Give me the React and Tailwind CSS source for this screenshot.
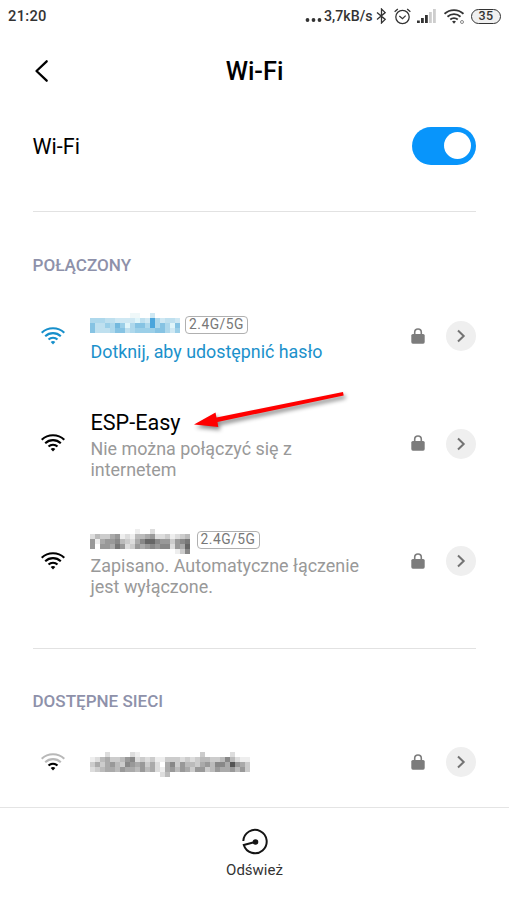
import React from "react";

const blueTones = {
  0: "#ffffff", 1: "#eff8f9", 2: "#e0f5fa", 3: "#cfe8f3", 4: "#bfe0ef",
  5: "#aed8ec", 6: "#9bcfe8", 7: "#86c3e3", 8: "#74b9de", 9: "#4aa5dc",
};

// Each character is one 5px cell: a blue tone, or a hex digit of gray.
const hiddenBlue = [
  "000000001100300000",
  "555443333243953443",
  "744658625775957527",
  "744457745666677536",
];
const hiddenGray = [
  "fffffffffeffdfffffff",
  "dbcca9edebba9ddcedcb",
  "9ea998bcda866899c987",
  "9f99a79dc9a98988d9a6",
  "fffffffffffffffffec8",
];
const hiddenLong = [
  "fffdffffdeffffffffffffcfffffdfff",
  "edbaccb98dcdceecccdcdcbbccb8bdee",
  "caca9bc89a9cadfa8c9bbca9b88a59ac",
  "dcbaab9aab9badea9b9ac99cb9aa9b9c",
  "ffffffffffffffdbffffffffffffffff",
];

function Mosaic({ rows, blue = false }) {
  return (
    <div aria-hidden="true" className="shrink-0">
      {rows.map((row, y) => (
        <div key={y} className="flex">
          {row.split("").map((c, x) => (
            <div
              key={x}
              className="h-[5px] w-[5px]"
              style={{ backgroundColor: blue ? blueTones[c] : `#${c.repeat(6)}` }}
            />
          ))}
        </div>
      ))}
    </div>
  );
}

function Wifi({ className = "", weak = false }) {
  const outer = weak ? "#b8b8b8" : "currentColor";
  return (
    <svg className={className} viewBox="0 0 24 18" fill="none" strokeWidth="2.1">
      <path d="M.7 5.7C7 -.2 17 -.2 23.3 5.7" stroke={outer} />
      <path d="M4.2 9.3c4.4-4.2 11.2-4.2 15.6 0" stroke={outer} />
      <path d="M7.5 12.6c2.5-2.4 6.5-2.4 9 0" stroke="currentColor" />
      <path d="M9.7 15c1.2-1.2 3.4-1.2 4.6 0L12 17.6z" fill="currentColor" />
    </svg>
  );
}

function Lock() {
  return (
    <svg className="mb-px h-4 w-[14px] text-[#7c7c7c]" viewBox="0 0 14 16">
      <path d="M3.7 7V4.3a3.3 3.3 0 0 1 6.6 0V7" fill="none" stroke="currentColor" strokeWidth="1.6" />
      <rect x=".3" y="6" width="13.4" height="9.7" rx="1.6" fill="currentColor" />
    </svg>
  );
}

function Actions({ className }) {
  return (
    <div className={`-mr-[.4px] ml-auto flex items-center gap-[21px] ${className}`}>
      <Lock />
      <button aria-label="Szczegóły" className="flex h-[30px] w-[30px] items-center justify-center rounded-full bg-[#efefef]">
        <svg className="h-4 w-4" viewBox="0 0 16 16" fill="none" stroke="#737373" strokeWidth="2">
          <path d="m5 2.5 5.7 5.5L5 13.5" />
        </svg>
      </button>
    </div>
  );
}

function Band() {
  return (
    <span className="flex h-[18px] w-[63px] shrink-0 items-center justify-center rounded-[4px] border border-[#b0b0b0] text-[13.8px] leading-none tracking-[0.5px] text-[#777]">
      2.4G/5G
    </span>
  );
}

function StatusIcons() {
  return (
    <div className="flex h-8 items-center">
      <svg className="mt-[8px] mr-px h-1 w-[18px]" viewBox="0 0 18 4" fill="#333">
        <circle cx="2.5" cy="2" r="1.9" /><circle cx="8.5" cy="2" r="1.9" /><circle cx="14.5" cy="2" r="1.9" />
      </svg>
      <span className="w-[50px] whitespace-nowrap pt-px text-[14.2px] font-medium">3,7kB/s</span>
      <svg className="ml-[2px] h-4 w-[11px]" viewBox="0 0 11 16" fill="none" stroke="#333" strokeWidth="1.3">
        <path d="m1 4.4 8.2 7L5.5 15V1l3.7 3.6L1 11.6" />
      </svg>
      <svg className="ml-[7px] h-[17px] w-[17px]" viewBox="0 0 16 16" fill="none" stroke="#333" strokeWidth="1.2">
        <circle cx="8" cy="8.5" r="6.3" /><path d="m.6 3.6 3-2.7m8.8 0 3 2.7M5 7.5l3 2.5 3-2.8" />
      </svg>
      <svg className="ml-[6px] h-[14px] w-[20px]" viewBox="0 0 20 14">
        <g fill="#333"><rect y="11.5" width="2.8" height="2.5" /><rect x="4" y="9" width="2.8" height="5" /><rect x="8" y="6" width="2.8" height="8" /></g>
        <g fill="#cdcdcd"><rect x="12" y="3" width="2.8" height="11" /><rect x="16" width="2.8" height="14" /></g>
      </svg>
      <div className="ml-[7px] flex items-end">
        <Wifi className="h-[15px] w-5 text-[#333]" />
        <span className="-ml-[4px] h-1 w-1 rounded-full border border-[#888] bg-white" />
      </div>
      <span className="ml-[7px] flex h-[15px] w-[30px] items-center justify-center rounded-full border-[1.5px] border-[#333] bg-[#f0f0f0] text-[12.5px] leading-none font-medium tracking-[.5px]">35</span>
    </div>
  );
}

export default function App() {
  return (
    <main className="relative flex h-[902px] w-[509px] flex-col overflow-hidden bg-white font-['Roboto','Noto_Sans',sans-serif] text-black">
      <div className="flex h-8 shrink-0 items-center justify-between pr-[8px] pl-[8px] text-[#333]">
        <span className="pt-px text-[14.7px] font-medium tracking-[.3px]">21:20</span>
        <StatusIcons />
      </div>
      <header className="grid h-[80px] shrink-0 grid-cols-[1fr_auto_1fr] items-center px-[33px]">
        <button aria-label="Wstecz" className="mb-[3px] w-4">
          <svg className="h-6 w-4" viewBox="0 0 16 24" fill="none" stroke="#000" strokeWidth="2.3" strokeLinecap="round" strokeLinejoin="round">
            <path d="M13.7 2.3 3.5 12 13.7 21.7" />
          </svg>
        </button>
        <h1 className="text-[25.3px] font-medium">Wi-Fi</h1>
      </header>
      <section className="mx-[33px] flex h-[100px] shrink-0 items-start justify-between border-b border-[#e2e2e2] pt-[15px]">
        <span className="-ml-[.5px] pt-[4px] text-[21.5px] leading-[32px]">Wi-Fi</span>
        <button aria-label="Wi-Fi" className="-mr-[.4px] flex h-[37.5px] w-[64px] items-center justify-end rounded-full bg-[#0895fb] pr-[5.5px]">
          <span className="h-[27px] w-[27px] rounded-full bg-white" />
        </button>
      </section>
      <section className="mx-[33px] h-[437px] shrink-0 border-b border-[#e2e2e2]">
        <h2 className="-ml-[.5px] h-[101px] pt-[43px] text-[17.1px] leading-5 font-medium text-[#8e91aa]">POŁĄCZONY</h2>
        <div className="flex h-[97px]">
          <Wifi className="mt-[14px] ml-[8px] h-[18px] w-6 text-[#168fcb]" />
          <div className="ml-[25px]">
            <div className="flex gap-[5px]">
              <Mosaic rows={hiddenBlue} blue />
              <div className="pt-[3px]"><Band /></div>
            </div>
            <p className="mt-[7px] ml-[.5px] text-[17.85px] leading-[21px] whitespace-nowrap text-[#1b91cb]">Dotknij, aby udostępnić hasło</p>
          </div>
          <Actions className="mt-[8.4px] h-[30px]" />
        </div>
        <div className="flex h-[119px]">
          <Wifi className="mt-[24px] ml-[8px] h-[18px] w-6" />
          <div className="ml-[25.5px]">
            <h3 className="text-[21.6px] leading-[25px]">ESP-Easy</h3>
            <p className="mt-[3px] text-[17.9px] leading-[21px] whitespace-nowrap text-[#999]">Nie można połączyć się z<br />internetem</p>
          </div>
          <Actions className="mt-[18.6px] h-[30px]" />
        </div>
        <div className="flex">
          <Wifi className="mt-[23px] ml-[8px] h-[18px] w-6" />
          <div className="ml-[24.5px]">
            <div className="flex gap-[7px]">
              <Mosaic rows={hiddenGray} />
              <div className="pt-[2px]"><Band /></div>
            </div>
            <p className="mt-px ml-px text-[17.95px] leading-[21px] whitespace-nowrap text-[#999]">Zapisano. Automatyczne łączenie<br />jest wyłączone.</p>
          </div>
          <Actions className="mt-[17px] h-[30px]" />
        </div>
      </section>
      <section className="mx-[33px] h-[158px] shrink-0">
        <h2 className="-ml-[.5px] h-[98px] pt-[42px] text-[17.05px] leading-5 font-medium text-[#8e91aa]">DOSTĘPNE SIECI</h2>
        <div className="flex">
          <Wifi weak className="mt-[6px] ml-[8px] h-[18px] w-6" />
          <div className="mt-[5px] ml-[25px]"><Mosaic rows={hiddenLong} /></div>
          <Actions className="h-[30px]" />
        </div>
      </section>
      <footer className="flex flex-1 flex-col items-center border-t border-[#e4e4e4] pt-[20px]">
        <svg className="h-7 w-7" viewBox="0 0 28 28" fill="none" stroke="#151515" strokeWidth="2">
          <path d="M2.3 13A11.7 11.7 0 1 1 2.8 17L14 14" /><circle cx="14.5" cy="14" r="1.8" fill="#151515" />
        </svg>
        <span className="mt-[5px] text-[15px] leading-[18px] text-[#333]">Odśwież</span>
      </footer>
      <svg className="absolute top-[385px] left-[190px] h-12 w-40" viewBox="0 0 160 48" style={{ filter: "drop-shadow(2px 3px 2px #0007)" }}>
        <path d="m4 39.5 21.5-12 1 5L153 7l.7 3.5L27.5 37l.8 5z" fill="#f00" />
      </svg>
    </main>
  );
}
